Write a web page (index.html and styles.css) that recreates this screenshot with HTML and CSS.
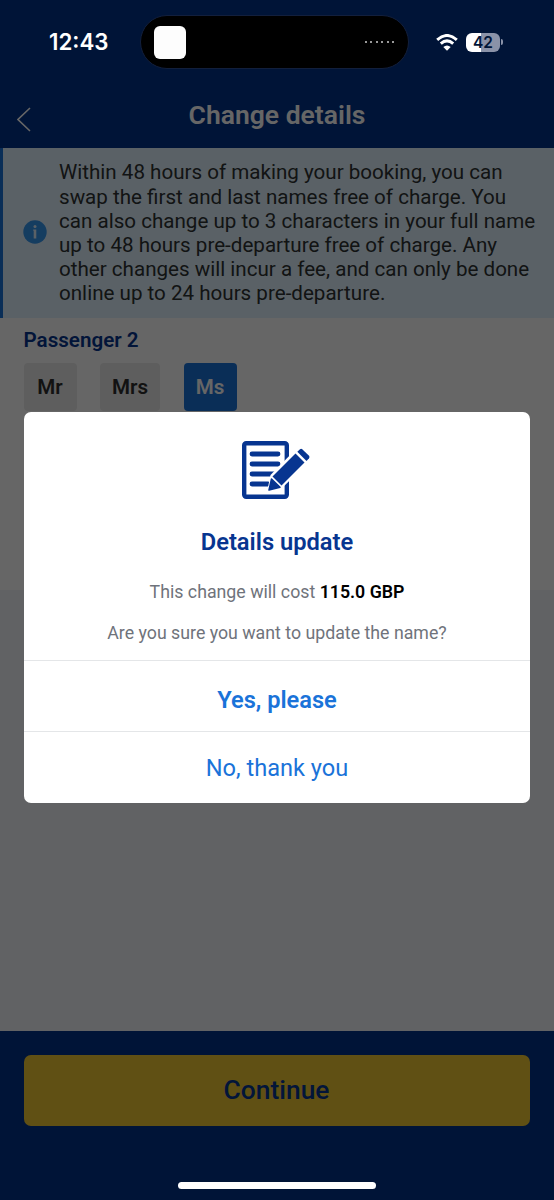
FILE: index.html
```
<!DOCTYPE html>
<html lang="en">
<head>
    <meta charset="UTF-8">
    <meta name="viewport" content="width=device-width, initial-scale=1.0">
    <title>Change details</title>
    <link rel="stylesheet" href="styles.css">
</head>
<body>
    <div class="screen">
        <header class="header">
            <svg class="back" width="14" height="25" viewBox="0 0 14 25"><path d="M13 1L1 12.5L13 24" fill="none" stroke="#fff" stroke-width="1.6"/></svg>
            <h1>Change details</h1>
        </header>

        <div class="info">
            <svg class="info-icon" width="24" height="24" viewBox="0 0 24 24">
                <circle cx="12" cy="12" r="11.7" fill="#3698f0"/>
                <circle cx="12" cy="6.600" r="1.5" fill="#e2f2ff"/>
                <path d="M10.200 9.600h3.100v9h-2.600v-7.800h-.5z" fill="#e2f2ff"/>
            </svg>
            <p>Within 48 hours of making your booking, you can swap the first and last names free of charge. You can also change up to 3 characters in your full name up to 48 hours pre-departure free of charge. Any other changes will incur a fee, and can only be done online up to 24 hours pre-departure.</p>
        </div>

        <main class="passenger">
            <h2>Passenger 2</h2>
            <div class="titles">
                <button class="title-btn">Mr</button>
                <button class="title-btn wide">Mrs</button>
                <button class="title-btn selected">Ms</button>
            </div>
        </main>

        <footer class="footer">
            <button class="continue">Continue</button>
        </footer>
    </div>

    <div class="overlay">
        <div class="modal">
            <div class="modal-body">
                <svg class="edit-icon" width="70" height="58" viewBox="0 0 70 58">
                    <rect x="2.2" y="2.2" width="42.6" height="53.6" rx="2" fill="#fff" stroke="#073590" stroke-width="4.4"/>
                    <path d="M10 13h26M10 23h26M10 33h24M10 43h16" stroke="#073590" stroke-width="4.8" stroke-linecap="round"/>
                    <path d="M25 51L28.500 34L56 6L70 18L40 47Z" fill="#fff"/>
                    <path d="M27 49L29.500 38L38 46.300Z" fill="#073590" stroke="#073590" stroke-width="1.5" stroke-linejoin="round"/>
                    <path d="M30.500 35.500L53.500 12.500L62.500 21.500L39.500 44.500Z" fill="#073590"/>
                    <path d="M55.300 10.700L58 8.200Q59.200 7.400 60.500 8.400L67 14.700Q68 16 67 17.200L64.500 19.900Z" fill="#073590"/>
                </svg>
                <h3>Details update</h3>
                <p class="cost">This change will cost <b>115.0 GBP</b></p>
                <p class="question">Are you sure you want to update the name?</p>
            </div>
            <button class="modal-btn yes">Yes, please</button>
            <button class="modal-btn no">No, thank you</button>
        </div>
    </div>

    <div class="status-bar">
        <span class="time">12:43</span>
        <div class="island">
            <span class="app"></span>
            <span class="dots"><i></i><i></i><i></i><i></i><i></i><i></i></span>
        </div>
        <div class="signals">
            <svg width="22" height="17" viewBox="0 0 22 17">
                <path d="M1.200 5.800Q11 -2.800 20.800 5.800M4.800 9.600Q11 4.200 17.200 9.600" fill="none" stroke="#fff" stroke-width="3"/>
                <path d="M7.300 13Q11 9.800 14.700 13L11 16.700Z" fill="#fff"/>
            </svg>
            <span class="battery">42</span>
            <span class="battery-tip"></span>
        </div>
    </div>
    <div class="home-bar"></div>
</body>
</html>
```
FILE: styles.css
```
* {
    box-sizing: border-box;
}
body {
    margin: 0;
    font-family: Roboto, "Liberation Sans", sans-serif;
}
h1, h2, h3, p {
    margin: 0;
}
button {
    border: 0;
    padding: 0;
    font-family: inherit;
}
.screen {
    display: flex;
    flex-direction: column;
    height: 1200px;
    background: #f3f4f9;
}
.header {
    display: flex;
    align-items: center;
    height: 148px;
    padding: 82px 17px 0;
    background: #00328a;
    color: #fff;
}
.header h1 {
    flex: 1;
    padding-right: 14px;
    font-size: 26.5px;
    font-weight: 600;
    line-height: 30px;
    text-align: center;
}
.back {
    margin-top: 8px;
}
.info {
    display: flex;
    align-items: center;
    height: 170px;
    padding-left: 20px;
    border-left: 3px solid #1a73d9;
    background: #e2f2ff;
    color: #2e3333;
}
.info-icon {
    flex: none;
    margin: 0 12px 2px 0;
}
.info p {
    width: 483px;
    font-size: 20.6px;
    line-height: 24.2px;
}
.passenger {
    height: 272px;
    padding: 10px 23.5px;
    background: #fff;
}
.passenger h2 {
    font-size: 20.6px;
    font-weight: 600;
    line-height: 24px;
    color: #073590;
}
.titles {
    display: flex;
    gap: 23.5px;
    margin-top: 11px;
}
.title-btn {
    width: 53px;
    height: 48px;
    border-radius: 4px;
    background: #ebebeb;
    color: #2e2e2e;
    font-size: 20.6px;
    font-weight: 600;
}
.title-btn.wide {
    width: 60px;
}
.title-btn.selected {
    background: #1a73d9;
    color: #fff;
}
.footer {
    height: 169px;
    margin-top: auto;
    padding: 24px 24px 0;
    background: #00328a;
}
.continue {
    width: 100%;
    height: 71px;
    padding: 0 1px 1px 0;
    border-radius: 7px;
    background: #f1c933;
    color: #073590;
    font-size: 26.4px;
    font-weight: 500;
}

/* modal */
.overlay {
    position: absolute;
    top: 0;
    left: 0;
    width: 100%;
    height: 1200px;
    padding: 412px 24px 0;
    background: rgba(0, 0, 0, 0.6);
}
.modal {
    height: 391px;
    border-radius: 7px;
    background: #fff;
    text-align: center;
    overflow: hidden;
}
.modal-body {
    display: flex;
    flex-direction: column;
    align-items: center;
    height: 248px;
    padding-top: 29px;
    color: #6f737b;
    font-size: 17.75px;
    line-height: 22px;
}
.modal-body h3 {
    margin-top: 28px;
    font-size: 23.7px;
    font-weight: 600;
    line-height: 30px;
    color: #073590;
}
.cost {
    margin-top: 24px;
}
.cost b {
    font-weight: 600;
    color: #000;
}
.question {
    margin-top: 19px;
}
.modal-btn {
    display: block;
    width: 100%;
    height: 71px;
    border-top: 1px solid #e4e6e8;
    background: none;
    color: #1a73d9;
    font-size: 23.6px;
}
.modal-btn.yes {
    padding-top: 8px;
    font-weight: 600;
}
.modal-btn.no {
    padding-top: 2px;
}

/* phone status bar, stays above the overlay */
.status-bar {
    position: absolute;
    top: 15px;
    left: 0;
    display: flex;
    align-items: center;
    width: 554px;
    height: 54px;
    padding-left: 49px;
    color: #fff;
}
.time {
    width: 91px;
    padding-bottom: 2px;
    font-family: Inter, sans-serif;
    font-size: 22.3px;
    font-weight: 600;
}
.island {
    display: flex;
    align-items: center;
    justify-content: space-between;
    width: 269px;
    height: 54px;
    padding: 0 14px 0 13px;
    border: 1px solid #121f3c;
    border-radius: 27px;
    background: #000;
}
.app {
    width: 32px;
    height: 33px;
    border-radius: 6px;
    background: #fdfdfd;
}
.dots {
    display: flex;
    gap: 3.4px;
}
.dots i {
    width: 2px;
    height: 2px;
    background: #999;
}
.signals {
    display: flex;
    align-items: center;
    margin-left: 27px;
}
.battery {
    width: 34px;
    height: 19px;
    margin-left: 8px;
    border-radius: 6px;
    background: linear-gradient(to right, #fff 44%, #8a92a8 44%);
    color: #001437;
    font-family: Inter, sans-serif;
    font-size: 15.5px;
    font-weight: 600;
    line-height: 19px;
    text-align: center;
}
.battery-tip {
    width: 2px;
    height: 6px;
    margin-left: 1px;
    border-radius: 0 2px 2px 0;
    background: #8a92a8;
}
.home-bar {
    position: absolute;
    top: 1182px;
    left: 178px;
    width: 198px;
    height: 7px;
    border-radius: 4px;
    background: #fff;
}
```
